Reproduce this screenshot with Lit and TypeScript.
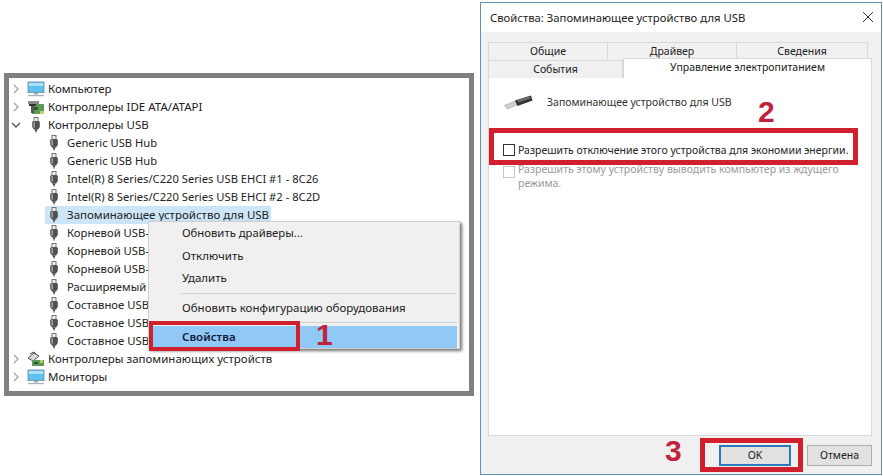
import { LitElement, html, css, svg } from "lit";
import { customElement } from "lit/decorators.js";

const plug = svg`<svg class="ic" viewBox="0 0 14 16" width="14" height="16"><rect x="5" y="0.5" width="4" height="4" fill="#eee" stroke="#777"/><path d="M3.2 5.5q0-1.5 1.5-1.5h4.6q1.5 0 1.5 1.5V10l-1.8 2.5H5L3.2 10z" fill="#505050"/><rect x="4.4" y="4.6" width="1.6" height="6" fill="#a0a0a0"/><path d="M5.5 12.5h3l-.7 2h-1.6z" fill="#444"/><path d="M7 14.5v1.5" stroke="#888"/></svg>`;
const topPlug = svg`<svg class="ic" viewBox="-2 0 18 16" width="18" height="16"><rect x="5" y="0.5" width="4" height="4" fill="#eee" stroke="#777"/><path d="M3.2 5.5q0-1.5 1.5-1.5h4.6q1.5 0 1.5 1.5V10l-1.8 2.5H5L3.2 10z" fill="#505050"/><rect x="4.4" y="4.6" width="1.6" height="6" fill="#a0a0a0"/><path d="M5.5 12.5h3l-.7 2h-1.6z" fill="#444"/><path d="M7 14.5v1.5" stroke="#888"/></svg>`;
const monitor = svg`<svg class="ic" viewBox="0 0 18 16" width="18" height="16"><rect x="1" y="1" width="16" height="10.5" fill="#5cc0ef" stroke="#7a9cb0"/><rect x="2" y="2" width="14" height="3" fill="#a8e0f8"/><path d="M7 12h4v1.5H7z" fill="#9ab"/><path d="M1 14.5h16" stroke="#aab4bb" stroke-width="1.4"/></svg>`;
const ide = svg`<svg class="ic" viewBox="0 0 18 16" width="18" height="16"><rect x="5" y="5" width="12" height="10" fill="#5e9a55"/><rect x="7" y="8" width="4" height="3" fill="#2c5c2a"/><path d="M1 2h11v3H1z" fill="#8b8b8b"/><path d="M2 5h7v2H2z" fill="#333"/><path d="M4 7h3v7H4z" fill="#555"/><path d="M13 12h4v3h-4z" fill="#c9d26a"/></svg>`;
const storage = svg`<svg class="ic" viewBox="0 0 18 16" width="18" height="16"><path d="M1 7l6-5 5 3-6 5z" fill="#d8d8d8" stroke="#555"/><path d="M3 3l4-2 2 2" fill="none" stroke="#444"/><rect x="5" y="9" width="12" height="6" fill="#5e9a55"/><path d="M7 11h4v2H7z" fill="#253"/><path d="M13 9h3v3h-3z" fill="#b6c862"/></svg>`;
const chevR = svg`<svg class="ch" viewBox="0 0 10 10" width="10" height="10"><path d="M3 1l4 4-4 4" fill="none" stroke="#a6a6a6" stroke-width="1.4"/></svg>`;
const chevD = svg`<svg class="ch" viewBox="0 0 10 10" width="10" height="10"><path d="M1 3l4 4 4-4" fill="none" stroke="#555" stroke-width="1.4"/></svg>`;

const top1: [unknown, unknown, string][] = [
  [chevR, monitor, "Компьютер"],
  [chevR, ide, "Контроллеры IDE ATA/ATAPI"],
  [chevD, topPlug, "Контроллеры USB"],
];
const kids = [
  "Generic USB Hub",
  "Generic USB Hub",
  "Intel(R) 8 Series/C220 Series USB EHCI #1 - 8C26",
  "Intel(R) 8 Series/C220 Series USB EHCI #2 - 8C2D",
  "Запоминающее устройство для USB",
  "Корневой USB-",
  "Корневой USB-",
  "Корневой USB-",
  "Расширяемый",
  "Составное USB",
  "Составное USB",
  "Составное USB",
];
const top2: [unknown, unknown, string][] = [
  [chevR, storage, "Контроллеры запоминающих устройств"],
  [chevR, monitor, "Мониторы"],
];

@customElement("app-root")
export class AppRoot extends LitElement {
  static styles = css`
    :host { display: block; width: 883px; height: 476px; overflow: hidden; background: #fff;
      font-family: "Noto Sans", sans-serif; font-size: 11.5px; color: #222; }
    .page { position: relative; display: flex; align-items: flex-start; width: 883px; height: 476px; }
    .tree { box-sizing: border-box; width: 470px; height: 323px; margin: 73px 0 0 4px; border: 5px solid #808080;
      padding-top: 2px; background: #fff; display: flex; flex-direction: column; }
    .row { display: flex; align-items: center; height: 18px; flex: none; white-space: nowrap; line-height: 18px; }
    .ch { margin-left: 2px; flex: none; }
    .top .ic { margin-left: 6px; flex: none; }
    .top .lbl { margin-left: 3px; }
    .kid { padding-left: 38px; }
    .kid .ic { flex: none; }
    .kid .lbl { margin-left: 5px; padding: 0 1px; }
    .kid.lat .lbl { font-size: 11.2px; }
    .kid.cut .lbl { padding-right: 0; font-size: 11.3px; }
    .kid.sel { background: linear-gradient(#cde6f7, #cde6f7) 36px 0 / 226px 100% no-repeat; }
    .menu { position: absolute; left: 148px; top: 221px; width: 312px; height: 128px; box-sizing: border-box;
      background: #f0f0f0; border: 1px solid #d0d0d0; box-shadow: 2px 2px 3px rgba(0,0,0,.55); }
    .mi { height: 22.5px; line-height: 21px; padding-left: 33px; white-space: nowrap; }
    .mi.s { font-size: 11.3px; }
    .sep { height: 1px; background: #d4d4d4; margin: 3px 2px 3px 32px; }
    .mi.hi { background: #90c8f6; margin: 0 2px; padding-left: 31px; font-weight: 600; color: #14203a; height: 22px; line-height: 22px; }
    .red { position: absolute; box-sizing: border-box; border: 4px solid #d0202e; }
    .r1 { left: 149px; top: 321px; width: 151px; height: 30px; }
    .r2 { left: 489px; top: 128px; width: 369px; height: 37px; border-width: 5px; }
    .r3 { left: 700px; top: 438px; width: 103px; height: 34px; border-width: 5px; }
    .num { position: absolute; font-family: "Liberation Sans", sans-serif; font-weight: 700; font-size: 30px; line-height: 30px; color: #c0243c; }
    .n1 { left: 316px; top: 320px; }
    .n2 { left: 758px; top: 97px; }
    .n3 { left: 665px; top: 436px; }
    .dlg { box-sizing: border-box; width: 402px; height: 473px; margin: 2px 0 0 6px; border: 1px solid #5f93ad;
      background: #f0f0f0; display: flex; flex-direction: column; }
    .tb { height: 29px; background: #fff; display: flex; align-items: center; justify-content: space-between; padding: 0 7px 1px 9px; font-size: 11.3px; flex: none; box-sizing: border-box; }
    .body { flex: 1; display: flex; flex-direction: column; padding: 10px 9px 0 7px; font-size: 10.5px; }
    .tabs1, .tabs2 { display: flex; height: 18px; flex: none; }
    .t { box-sizing: border-box; text-align: center; background: #f0f0f0; border: 1px solid #d9d9d9; border-bottom: 0; border-left-width: 0; line-height: 16px; height: 18px; }
    .t:first-child { border-left-width: 1px; }
    .tabs1 { width: 380px; }
    .tabs1 .t { width: 129px; } .tabs1 .t:first-child { width: 120px; } .tabs1 .t:last-child { width: 131px; }
    .tabs2 { position: relative; }
    .tabs2 .t:first-child { width: 135px; }
    .tabs2 .t.a { flex: 1; background: #fff; height: 20px; margin-top: -2px; line-height: 16px; border-left-width: 1px; position: relative; color: #1a1a1a; }
    .pane { box-sizing: border-box; height: 358px; background: #fff; border: 1px solid #d9d9d9; border-top: 0; padding: 0 0 0 15px; flex: none; }
    .dev { display: flex; align-items: center; gap: 14px; height: 20px; margin-top: 14px; color: #333; }
    .cb { box-sizing: border-box; width: 12px; height: 12px; border: 1px solid #333; background: #fff; flex: none; margin-top: 1px; }
    .opt { display: flex; gap: 3px; margin-top: 31px; margin-left: -1px; line-height: 14px; white-space: nowrap; }
    .opt.d { margin-top: 5px; color: #9a9a9a; white-space: normal; width: 340px; line-height: 14px; }
    .opt.d .cb { border-color: #c8c8c8; margin-top: 4px; }
    .btns { display: flex; justify-content: flex-end; gap: 16px; padding: 9px 0 0 0; }
    .b { box-sizing: border-box; height: 21px; line-height: 19px; text-align: center; background: #e1e1e1; border: 1px solid #adadad; width: 65px; }
    .b.ok { width: 72px; border: 2px solid #2a78b8; line-height: 17px; }
  `;

  row(c: unknown, ic: unknown, t: string) {
    return html`<div class="row top">${c}${ic}<span class="lbl">${t}</span></div>`;
  }

  render() {
    return html`<div class="page">
      <div class="tree">
        ${top1.map(([c, i, t]) => this.row(c, i, t))}
        ${kids.map((t, i) => html`<div class="row kid ${i === 4 ? "sel" : ""} ${i < 4 ? "lat" : ""} ${i > 4 ? "cut" : ""}">${plug}<span class="lbl">${t}</span></div>`)}
        ${top2.map(([c, i, t]) => this.row(c, i, t))}
      </div>
      <div class="dlg">
        <div class="tb"><span>Свойства: Запоминающее устройство для USB</span>
          <svg width="12" height="12" viewBox="0 0 12 12"><path d="M1 1l10 10M11 1L1 11" stroke="#333" fill="none"/></svg></div>
        <div class="body">
          <div class="tabs1"><div class="t">Общие</div><div class="t">Драйвер</div><div class="t">Сведения</div></div>
          <div class="tabs2"><div class="t">События</div><div class="t a">Управление электропитанием</div></div>
          <div class="pane">
            <div class="dev">
              <svg width="29" height="16" viewBox="0 0 29 16"><path d="M0.5 11.5l11-4.5 2 3.5-10 4.5z" fill="#d0d0d0" stroke="#999" stroke-width=".6"/><path d="M11 6.5l16-5 1.5 5-15 5.5z" fill="#333"/><path d="M13 6.5l13-4 .5 2-12 4z" fill="#707070"/></svg>
              <span>Запоминающее устройство для USB</span></div>
            <div class="opt"><div class="cb"></div><span>Разрешить отключение этого устройства для экономии энергии.</span></div>
            <div class="opt d"><div class="cb"></div><span>Разрешить этому устройству выводить компьютер из ждущего режима.</span></div>
          </div>
          <div class="btns"><div class="b ok">OK</div><div class="b">Отмена</div></div>
        </div>
      </div>
      <div class="menu">
        <div class="mi s">Обновить драйверы...</div><div class="mi">Отключить</div><div class="mi">Удалить</div>
        <div class="sep"></div>
        <div class="mi">Обновить конфигурацию оборудования</div>
        <div class="sep"></div>
        <div class="mi hi">Свойства</div>
      </div>
      <div class="red r1"></div><div class="red r2"></div><div class="red r3"></div>
      <div class="num n1">1</div><div class="num n2">2</div><div class="num n3">3</div>
    </div>`;
  }
}
